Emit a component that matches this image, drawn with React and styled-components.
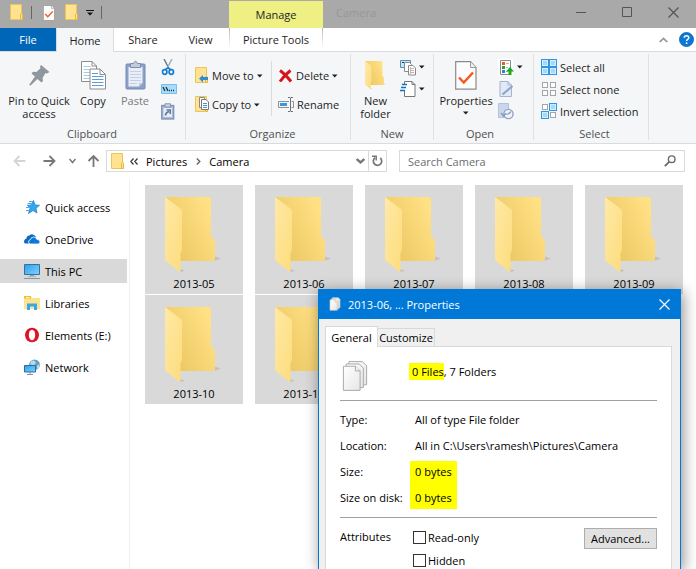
import React, { useState } from "react";
import styled, { createGlobalStyle, css } from "styled-components";

const GlobalStyle = createGlobalStyle`
  * { box-sizing: border-box; }
  body {
    margin: 0;
    background: #fff;
    color: #1e1e1e;
    font: 11px/13px "Open Sans", "Noto Sans", sans-serif;
  }
  button, input { font: inherit; color: inherit; }
  button { border: 0; padding: 0; background: none; cursor: default; }
  a { color: inherit; text-decoration: none; }
  svg { display: block; flex: none; }
`;

const Window = styled.div`
  position: relative;
  display: flex;
  flex-direction: column;
  min-height: 100vh;
  overflow: hidden;
`;

/* ---------- title bar ---------- */

const TitleBar = styled.header`
  display: flex;
  height: 28px;
  background: #a9a9a9;
`;

const QuickBar = styled.div`
  display: flex;
  align-items: flex-start;
  width: 229px;
  padding: 4px 0 0 10px;
`;

const QuickButton = styled.button`
  display: flex;
  align-items: center;
  justify-content: center;
  width: ${(props) => props.$width || 14}px;
  height: 17px;
  margin-right: ${(props) => props.$gap || 0}px;
`;

const QuickDivider = styled.span`
  width: 1px;
  height: 13px;
  margin: 2px ${(props) => props.$gap || 0}px 0 7px;
  background: #666;
`;

const ManageTab = styled.button`
  width: 94px;
  margin-top: 1px;
  background: #eff083;
`;

const WindowTitle = styled.h1`
  flex: 1;
  margin: 0;
  padding-left: 13px;
  font-size: 11px;
  font-weight: 400;
  line-height: 26px;
  color: #979797;
`;

const WindowButton = styled.button`
  display: flex;
  justify-content: center;
  width: 46px;
  padding-top: 7px;
`;

const WindowButtons = styled.div`
  display: flex;
`;

/* ---------- ribbon ---------- */

const TabRow = styled.nav`
  display: flex;
  height: 23px;
`;

const Tab = styled.button`
  width: ${(props) => props.$width}px;
  height: 23px;
  ${(props) =>
    props.$file &&
    css`
      background: #0067b8;
      color: #fff;
    `}
  ${(props) =>
    props.$active &&
    css`
      height: 24px;
      background: #f5f6f7;
      border: 1px solid #dadbdc;
      border-bottom: 0;
      border-top-color: #f5f6f7;
      z-index: 1;
    `}
`;

const ContextTab = styled(Tab)`
  border: 1px solid;
  border-width: 0 1px;
  border-image: linear-gradient(#b5b5b5, #fff 85%) 1;
`;

const TabTools = styled.div`
  display: flex;
  flex: 1;
  align-items: center;
  justify-content: flex-end;
  gap: 11px;
  margin-right: 2px;
`;

const Ribbon = styled.section`
  display: flex;
  height: 93px;
  padding: 2px 0 3px;
  background: #f5f6f7;
  border: solid #dadbdc;
  border-width: 1px 0;
`;

const Group = styled.div`
  display: flex;
  flex-direction: column;
  padding: 0 ${(props) => props.$right || 0}px 0 ${(props) => props.$left || 0}px;
  border-right: 1px solid #e0e1e2;
`;

const GroupBody = styled.div`
  display: flex;
  flex: 1;
`;

const GroupLabel = styled.div`
  text-align: center;
  color: #505050;
`;

const BigButton = styled.button`
  display: flex;
  flex-direction: column;
  align-items: center;
  gap: 4px;
  width: ${(props) => props.$width}px;
  padding-top: 6px;
  color: ${(props) => (props.$dim ? "#7a7a7a" : "inherit")};
`;

const BigIcon = styled.span`
  display: flex;
  align-items: center;
  height: 30px;
`;

const Caption = styled.span`
  white-space: pre;
`;

const SmallStack = styled.div`
  display: flex;
  flex-direction: column;
  padding-top: ${(props) => props.$top || 2}px;
  padding-left: ${(props) => props.$left || 0}px;
  width: ${(props) => props.$width}px;
`;

const SmallButton = styled.button`
  display: flex;
  align-items: center;
  gap: 3px;
  height: ${(props) => props.$height || 22}px;
  white-space: nowrap;
`;

const GroupDivider = styled.span`
  width: 1px;
  margin: 7px 0 11px;
  background: #dadbdc;
`;

/* ---------- address row ---------- */

const AddressRow = styled.div`
  display: flex;
  align-items: center;
  height: 35px;
  padding: 0 11px 1px 13px;
`;

const NavButton = styled.button`
  display: flex;
  justify-content: center;
  width: 12px;
  margin-right: ${(props) => props.$gap}px;
`;

const AddressBox = styled.div`
  display: flex;
  align-items: center;
  flex: 275;
  height: 22px;
  margin-right: 12px;
  padding-left: 4px;
  border: 1px solid #d9d9d9;
  color: #000;
`;

const CrumbMark = styled.span`
  margin-left: 5px;
`;

const Crumb = styled.a`
  margin: 0 9px 0 8px;
`;

const DropButton = styled.button`
  display: flex;
  justify-content: center;
  width: 15px;
  margin-left: auto;
`;

const RefreshButton = styled.button`
  display: flex;
  align-items: center;
  justify-content: center;
  width: 18px;
  height: 20px;
  border-left: 1px solid #d9d9d9;
`;

const SearchBox = styled.label`
  display: flex;
  align-items: center;
  flex: 268;
  height: 22px;
  padding: 0 8px;
  border: 1px solid #d9d9d9;
`;

const SearchInput = styled.input`
  flex: 1;
  min-width: 0;
  padding: 0;
  border: 0;
  outline: 0;
  background: transparent;
  &::placeholder { color: #6d6d6d; opacity: 1; }
`;

/* ---------- body ---------- */

const Body = styled.div`
  display: flex;
  flex: 1;
`;

const Sidebar = styled.nav`
  display: flex;
  flex-direction: column;
  gap: 8px;
  width: 130px;
  padding: 16px 2px 0 0;
  border-right: 1px solid #f0f0f0;
`;

const SideLink = styled.a`
  display: flex;
  align-items: center;
  gap: 5px;
  height: 24px;
  padding-left: 24px;
  color: #000;
  background: ${(props) => (props.$active ? "#d9d9d9" : "transparent")};
`;

const FolderGrid = styled.main`
  flex: 1;
  display: grid;
  grid-template-columns: repeat(auto-fill, 98px);
  grid-auto-rows: 109px;
  gap: 1px 12px;
  align-content: start;
  padding: 6px 0 0 15px;
`;

const FolderTile = styled.button`
  display: flex;
  flex-direction: column;
  align-items: center;
  gap: 3px;
  padding-top: 12px;
  background: #d9d9d9;
  color: #000;
`;

/* ---------- properties dialog ---------- */

const Dialog = styled.section`
  position: absolute;
  top: 289px;
  bottom: 0;
  left: 318px;
  display: flex;
  flex-direction: column;
  width: 363px;
  background: #f0f0f0;
  border: 1px solid #0078d7;
  border-bottom: 0;
  box-shadow: 2px 3px 14px rgba(0, 0, 0, 0.45);
  color: #000;
`;

const DialogTitle = styled.div`
  display: flex;
  align-items: center;
  gap: 7px;
  height: 30px;
  padding: 0 10px 1px;
  background: #0078d7;
  color: #fff;
`;

const DialogClose = styled.button`
  margin-left: auto;
`;

const DialogTabs = styled.div`
  display: flex;
  align-items: flex-end;
  height: 27px;
  padding-left: 6px;
`;

const DialogTab = styled.button`
  position: relative;
  width: ${(props) => (props.$active ? 53 : 57)}px;
  height: ${(props) => (props.$active ? 21 : 18)}px;
  background: ${(props) => (props.$active ? "#fff" : "#f0f0f0")};
  border: 1px solid #d9d9d9;
  border-bottom-width: 0;
  border-left-width: ${(props) => (props.$active ? 1 : 0)}px;
  margin-bottom: ${(props) => (props.$active ? -1 : 0)}px;
`;

const Panel = styled.div`
  flex: 1;
  margin: 0 8px 0 6px;
  padding: 13px 14px 0;
  background: #fff;
  border: 1px solid #d9d9d9;
  border-bottom: 0;
`;

const Summary = styled.div`
  display: flex;
  align-items: flex-start;
  height: 34px;
  padding-left: 2px;
  gap: 41px;
  line-height: 24px;
`;

const Mark = styled.mark`
  background: #ff0;
  color: inherit;
  padding: 1px 0 1px 3px;
`;

const Rule = styled.hr`
  height: 1px;
  margin: 6px 0;
  border: 0;
  background: #a0a0a0;
`;

const Facts = styled.dl`
  display: grid;
  grid-template-columns: 70px 1fr;
  grid-auto-rows: 26px;
  margin: 0;
  line-height: 26px;
`;

const Fact = styled.dd`
  justify-self: start;
  align-self: ${(props) => props.$edge || "stretch"};
  height: ${(props) => (props.$edge ? 24 : 26)}px;
  line-height: ${(props) => (props.$edge === "end" ? 22 : 26)}px;
  margin: 0;
  padding: 0 5px;
  background: ${(props) => (props.$edge ? "#ff0" : "transparent")};
`;

const Attributes = styled.fieldset`
  display: flex;
  align-items: flex-start;
  margin: 0;
  padding: 4px 0 0;
  border: 0;
`;

const AttributeName = styled.span`
  width: 73px;
  line-height: 18px;
`;

const Checks = styled.div`
  flex: 1;
`;

const CheckLabel = styled.label`
  display: flex;
  align-items: center;
  gap: 2px;
  height: 18px;
  margin-bottom: ${(props) => (props.$last ? 0 : 5)}px;
`;

const Check = styled.input`
  appearance: none;
  width: 13px;
  height: 13px;
  margin: 0;
  border: 1px solid #333;
  background: #fff;
  &:checked { background: #333; box-shadow: inset 0 0 0 2px #fff; }
`;

const AdvancedButton = styled.button`
  width: 73px;
  height: 21px;
  background: #e1e1e1;
  border: 1px solid #adadad;
`;

/* ---------- icons ---------- */

const HiddenSvg = styled.svg`
  position: absolute;
`;

const Gradients = () => (
  <HiddenSvg width="0" height="0" aria-hidden="true">
    <defs>
      <linearGradient id="back" x1="0" y1="1" x2="1" y2="0.4">
        <stop offset="0.2" stopColor="#ecc863" />
        <stop offset="1" stopColor="#ffe083" />
      </linearGradient>
      <linearGradient id="flap" x1="0" y1="0" x2="1" y2="1">
        <stop offset="0" stopColor="#ffe9a6" />
        <stop offset="1" stopColor="#fddc7c" />
      </linearGradient>
      <linearGradient id="screen" x1="0" y1="0" x2="1" y2="1">
        <stop offset="0" stopColor="#2ba0ee" />
        <stop offset="1" stopColor="#7fd2fb" />
      </linearGradient>
      <linearGradient id="paper" x1="0" y1="0" x2="1" y2="1">
        <stop offset="0" stopColor="#fff" />
        <stop offset="1" stopColor="#e6e6e6" />
      </linearGradient>
    </defs>
  </HiddenSvg>
);

const OpenFolder = ({ width = 58, height = 77 }) => (
  <svg width={width} height={height} viewBox="0 0 58 77">
    <path d="M49 64 56 61.500 50 59.500ZM15 75.500 20 73.500 15 72Z" fill="#000" opacity=".1" />
    <path d="M0 0H45Q46 0 46 1V39L50 43V63Q50 64 49 64H14Z" fill="url(#back)" />
    <path d="M0 0 16 12Q17 13 17 14V53L15.500 56V75.500L1 64Q0 63 0 62Z" fill="url(#flap)" />
  </svg>
);

const SmallFolder = ({ children }) => (
  <svg width="14" height="17" viewBox="0 0 14 17">
    <path d="M.5.500H11.500V15.500H.5Z" fill="#ffe391" stroke="#eac55c" />
    <path d="M10.500 10.500Q10.500 9.500 11.500 9.500T12.500 10.500V15.500H10.500Z" fill="#ffe391" stroke="#e6b93c" />
    {children}
  </svg>
);

const CheckedPage = ({ width, height }) => (
  <svg width={width} height={height} viewBox="0 0 22 29">
    <path d="M.7.700H15.500L21 6.500V28.200H.7Z" fill="#fdfdfd" stroke="#8a8a8a" strokeWidth="1.200" />
    <path d="M15.500.7V6.500H21" fill="#eee" stroke="#9a9a9a" />
    <path d="M4 16.500 8.800 21.500 18 11.500" fill="none" stroke="#f4581c" strokeWidth="2.500" />
  </svg>
);

const Caret = () => (
  <svg width="6" height="4" viewBox="0 0 6 4">
    <path d="M0 .5H5.500L2.750 3.500Z" fill="#1e1e1e" />
  </svg>
);

const PinIcon = () => (
  <svg width="21" height="21" viewBox="0 0 21 21">
    <path d="M12 0 20.500 7 18 8.500 16.500 8 13.500 13 14 16 12.500 17.500 8.500 14 1.500 20.500 0 20 6 11.500 2.500 8.500 4 6.800 7.500 7 11.500 3.200 11 1.500Z" fill="#8f979e" />
  </svg>
);

const CopyIcon = () => (
  <svg width="25" height="29" viewBox="0 0 25 29">
    <path d="M.5.500H11L15.500 5V20.500H.5Z" fill="#fff" stroke="#8c8c8c" />
    <path d="M2.500 5.500H10M2.500 8.500H9M2.500 11.500H9M2.500 14.500H9M2.500 17.500H9" stroke="#a9cbea" />
    <path d="M9 8H19L24.500 13.500V28H9Z" fill="#fff" stroke="#8c8c8c" />
    <path d="M19 8V13.500H24.500M11 .5V5H15.500" fill="none" stroke="#8c8c8c" />
    <path d="M11 12.500H17M11 15.500H22.500M11 18.500H22.500M11 21.500H22.500M11 24.500H22.500" stroke="#5b9bdb" />
  </svg>
);

const PasteIcon = () => (
  <svg width="21" height="30" viewBox="0 0 21 30">
    <rect x="1" y="4" width="19" height="25" rx="1" fill="#8ca0c8" stroke="#7589b4" />
    <path d="M3.500 7H17.500V23L14 26.500H3.500Z" fill="#e9eef7" />
    <path d="M5 11.500H16M5 14.500H16M5 17.500H16M5 20.500H16M5 23.500H12" stroke="#c3cfe4" />
    <path d="M5.500 3.500H8.500Q10.500-1 12.500 3.500H15.500V7.500H5.500Z" fill="#c3cbd9" stroke="#7b8fae" />
    <path d="M14 26.500V23H17.500Z" fill="#bdcae2" />
  </svg>
);

const CutIcon = () => (
  <svg width="14" height="17" viewBox="0 0 14 17">
    <path d="M3 0 8.500 10.500" stroke="#5f6c78" strokeWidth="1.300" />
    <path d="M11 0 5.500 10.500" stroke="#a5b0ba" strokeWidth="1.600" />
    <ellipse cx="3.700" cy="13" rx="2.200" ry="2.300" fill="none" stroke="#1580d2" strokeWidth="1.700" />
    <ellipse cx="10.300" cy="13" rx="2.200" ry="2.300" fill="none" stroke="#1580d2" strokeWidth="1.700" />
    <path d="M3.500 10.800 7 8.800 10.500 10.800" fill="none" stroke="#1580d2" strokeWidth="1.500" />
  </svg>
);

const PathIcon = () => (
  <svg width="16" height="10" viewBox="0 0 16 10">
    <path d="M.5.500H15.500V9.500H.5Z" fill="#a9dcfb" stroke="#79bde9" />
    <path d="M2 3 4 7M5 3 7 7" stroke="#20303c" strokeWidth="1.300" />
    <path d="M8 6.500H9M10 6.500H11M12 6.500H13" stroke="#20303c" strokeWidth="1.300" />
  </svg>
);

const ShortcutIcon = () => (
  <svg width="14" height="17" viewBox="0 0 14 17">
    <rect x=".7" y="2.500" width="12" height="13.500" fill="#a9b9d6" stroke="#7f93b9" strokeWidth="1.300" />
    <path d="M2.500 5H11V14H2.500Z" fill="#e6ecf6" />
    <path d="M4 .8H9.500V4H4Z" fill="#ccd5e4" stroke="#7f93b9" />
    <path d="M4.500 12.500Q4.500 9.500 8 8.500M5.500 7H9.300V11" fill="none" stroke="#61799f" strokeWidth="1.600" />
  </svg>
);

const DeleteIcon = () => (
  <svg width="15" height="14" viewBox="0 0 15 14">
    <path d="M2 1.500Q7 5 13 12.500M12.500 1.500Q7 5.500 2 12.500" fill="none" stroke="#d9131d" strokeWidth="3" />
  </svg>
);

const RenameIcon = () => (
  <svg width="16" height="15" viewBox="0 0 16 15">
    <path d="M11 4.500H.5V10.500H11M13.500 4.500H15.500V10.500H13.500" fill="none" stroke="#8c9299" />
    <path d="M2 6H9V9H2Z" fill="#3a96dd" />
    <path d="M12.500 1V14M10 .5H12L12.500 1 13 .5H15M10 14.500H12L12.500 14 13 14.500H15" fill="none" stroke="#6d7379" />
  </svg>
);

const NewItemIcon = () => (
  <svg width="16" height="17" viewBox="0 0 16 17">
    <path d="M.5 1.500H10.500V8.500H.5Z" fill="#c8e6f6" stroke="#4f8fb5" />
    <path d="M2 3.500H4M5 3.500H8" stroke="#333" />
    <path d="M4.500 3.500H9.500L11.500 5.500V12.500H4.500Z" fill="#fff" stroke="#8a8a8a" />
    <path d="M8.500 6.500H13L15.500 9V16H8.500Z" fill="#fff" stroke="#8a8a8a" />
    <path d="M10 9.500H14M10 11.500H14M10 13.500H14" stroke="#e9a78a" />
    <path d="M10.500 8V15" stroke="#9cc4ea" />
  </svg>
);

const EasyAccessIcon = () => (
  <svg width="16" height="17" viewBox="0 0 16 17">
    <path d="M4.500.500H12L15 3.500V15.500H4.500Z" fill="#fff" stroke="#777" />
    <path d="M12 .5V3.500H15" fill="none" stroke="#777" />
    <path d="M4 3V10" stroke="#fff" strokeWidth="2" />
    <path d="M2 3.500H7M1 6.500H6M0 9.500H5" stroke="#1371c3" strokeWidth="1.300" />
  </svg>
);

const OpenWithIcon = () => (
  <svg width="16" height="17" viewBox="0 0 16 17">
    <path d="M0 0H15V16H0Z" fill="#fff" />
    <path d="M2.500 1.500H12.500V15.500H2.500Z" fill="#fff" stroke="#8a8a8a" />
    <path d="M4 3H7V6H4Z" fill="#f0581f" />
    <path d="M4 7H7V10H4Z" fill="#25a52a" />
    <path d="M4 11H7V14H4Z" fill="#2f7fd0" />
    <path d="M8 4.500H11M8 8.500H10M8 12.500H10" stroke="#bbb" />
    <path d="M12 8 16 12.500H13.500V16H10.500V12.500H8Z" fill="#1aab1d" />
  </svg>
);

const EditIcon = () => (
  <svg width="16" height="17" viewBox="0 0 16 17">
    <path d="M2 .5H10L13.500 4V15.500H2Z" fill="#e2e9f5" stroke="#a5b4d2" />
    <path d="M10 .5V4H13.500" fill="none" stroke="#a5b4d2" />
    <path d="M4.500 13.500 14.500 5" stroke="#91a5ca" strokeWidth="2.200" />
  </svg>
);

const HistoryIcon = () => (
  <svg width="16" height="17" viewBox="0 0 16 17">
    <path d="M.5.500H10.500V14.500H.5Z" fill="#cbd6ea" stroke="#b4c2dd" />
    <circle cx="10.500" cy="11" r="4.600" fill="#eef2f9" stroke="#8fa2c6" strokeWidth="1.400" />
    <path d="M10.500 11 13 8.500M10.500 11H8M3 10 5.500 13 8 10.500" fill="none" stroke="#8196bd" strokeWidth="1.200" />
  </svg>
);

const SELECT_CELLS = [[1, 1], [9, 1], [1, 9], [9, 9]];

const SelectIcon = ({ filled }) => (
  <svg width="16" height="16" viewBox="0 0 16 16">
    {SELECT_CELLS.map(([x, y], i) =>
      filled.includes(i) ? (
        <g key={i}>
          <rect x={x - 1} y={y - 1} width="8" height="8" fill="#3195e6" />
          <rect x={x} y={y} width="6" height="6" fill="#d5eefd" />
          <rect x={x + 1} y={y + 1} width="4" height="4" fill="#a3dafa" />
        </g>
      ) : (
        <rect key={i} x={x + 0.5} y={y + 0.5} width="5" height="5" fill="#fff" stroke="#a5a5a5" />
      )
    )}
  </svg>
);

const HelpIcon = () => (
  <svg width="15" height="15" viewBox="0 0 15 15">
    <circle cx="7.500" cy="7.500" r="7" fill="#0a78d6" stroke="#0b5cab" strokeWidth=".8" />
    <path d="M5.300 5.800Q5.300 3.700 7.500 3.700T9.800 5.700Q9.800 6.700 8.600 7.300 7.600 7.900 7.600 9" fill="none" stroke="#fff" strokeWidth="1.500" />
    <circle cx="7.600" cy="11.200" r=".9" fill="#fff" />
  </svg>
);

const Arrow = ({ color, rotate = 0 }) => (
  <svg width="13" height="12" viewBox="0 0 13 12">
    <path d="M12.500 6H1.500M6.500 1 1.500 6 6.500 11" fill="none" stroke={color} strokeWidth="1.800" transform={`rotate(${rotate} 6.500 6)`} />
  </svg>
);

const Chevron = ({ up, size = 7, color = "#777", weight = 1.5 }) => (
  <svg width={size} height="6" viewBox="0 0 7 6" preserveAspectRatio="none">
    <path d={up ? "M.5 5 3.500 1.500 6.500 5" : "M.5 1 3.500 4.500 6.500 1"} fill="none" stroke={color} strokeWidth={weight} />
  </svg>
);

const RefreshIcon = () => (
  <svg width="11" height="12" viewBox="0 0 11 12">
    <path d="M3 2.800A4.200 4.200 0 1 0 8.300 3" fill="none" stroke="#777" strokeWidth="1.700" />
    <path d="M0 1.200H4.200V5.500" fill="none" stroke="#777" strokeWidth="1.500" />
  </svg>
);

const SearchIcon = () => (
  <svg width="12" height="12" viewBox="0 0 12 12">
    <circle cx="7.700" cy="4.200" r="3.300" fill="none" stroke="#6a6a6a" strokeWidth="1.400" />
    <path d="M5.200 6.800.8 11.200" stroke="#6a6a6a" strokeWidth="1.800" />
  </svg>
);

const StarIcon = () => (
  <svg width="16" height="16" viewBox="0 0 16 16">
    <path d="M9.500 1.500 11 6 15.500 6.300 12 9.300 13 14 9 11.500 4.500 14.500 6 9.500 3.500 6.300 7.500 6Z" fill="#36a6ec" stroke="#1d86d0" strokeWidth=".8" />
    <path d="M5 2.500H9M3.500 4.500H8M2 8.500H6M2 11.500H5" stroke="#4aa9e6" />
  </svg>
);

const CloudIcon = () => (
  <svg width="16" height="16" viewBox="0 0 16 16">
    <path d="M0 11Q0 8 2.500 7.500 2.500 4.500 5.500 4.500 7.500 2.200 10 4Q12 5 12 7L9 8 5 12.500H2Q0 12.500 0 11Z" fill="#0a6bc0" />
    <path d="M4.500 11Q4.500 8.800 6.500 8.600 7 6 9.500 6 12 6 12.700 8.300 16 8.500 16 11 16 13 14 13H6.500Q4.500 13 4.500 11Z" fill="#0a78d6" stroke="#fff" strokeWidth=".8" />
  </svg>
);

const PcIcon = () => (
  <svg width="16" height="16" viewBox="0 0 16 16">
    <path d="M.5 1.500H15.500V11.500H.5Z" fill="url(#screen)" stroke="#3a6f96" />
    <path d="M6 12H10V13H6Z" fill="#8fa3b3" />
    <path d="M0 15.500H16" stroke="#7d98ad" />
    <path d="M4 13.500H12" stroke="#a7b6c2" />
  </svg>
);

const LibraryIcon = () => (
  <svg width="16" height="16" viewBox="0 0 16 16">
    <path d="M0 1H7L8 3H16V14H0Z" fill="#fde391" />
    <path d="M0 1H7V3.500H0Z" fill="#e8c12e" />
    <path d="M2 2.500H5.500" stroke="#fff6cf" />
    <path d="M3 15V8.500H13V15H10V11.500H6V15Z" fill="#36a8ea" />
  </svg>
);

const OperaIcon = () => (
  <svg width="16" height="16" viewBox="0 0 16 16">
    <ellipse cx="8" cy="8" rx="7" ry="7.300" fill="#dd1426" />
    <ellipse cx="8" cy="8" rx="3.200" ry="5.200" fill="#fff" />
  </svg>
);

const NetworkIcon = () => (
  <svg width="16" height="16" viewBox="0 0 16 16">
    <circle cx="10.500" cy="5.800" r="5.400" fill="#5f9fc4" />
    <path d="M7 2Q11 .5 12 4L9.500 7 6 5ZM13 6.500 15.500 5 15 9 13 10Z" fill="#b9d8e4" />
    <path d="M.5 6.500H11.500V13H.5Z" fill="url(#screen)" stroke="#2d6c9a" />
    <path d="M3 15.500H9M5 14H7" stroke="#8096a6" />
  </svg>
);

const Papers = ({ width, height }) => (
  <svg width={width} height={height} viewBox="0 0 28 34">
    <g fill="url(#paper)" stroke="#a5a5a5">
      <path d="M7.500 1.500H22L26.500 6V26.500H7.500Z" />
      <path d="M4.500 4H18.500L23 8.500V29.500H4.500Z" />
      <path d="M1.500 6.500H14.500L19.500 11.500V32.500H1.500Z" />
      <path d="M14.500 6.500V11.500H19.500" />
    </g>
  </svg>
);

const CrossIcon = ({ color }) => (
  <svg width="11" height="11" viewBox="0 0 11 11">
    <path d="M.5.500 10.500 10.500M10.500.500.500 10.500" stroke={color} strokeWidth="1.200" />
  </svg>
);

/* ---------- page ---------- */

const places = [
  { name: "Quick access", icon: <StarIcon /> },
  { name: "OneDrive", icon: <CloudIcon /> },
  { name: "This PC", icon: <PcIcon />, active: true },
  { name: "Libraries", icon: <LibraryIcon /> },
  { name: "Elements (E:)", icon: <OperaIcon /> },
  { name: "Network", icon: <NetworkIcon /> },
];

const folders = ["2013-05", "2013-06", "2013-07", "2013-08", "2013-09", "2013-10", "2013-11"];

const Header = () => (
  <TitleBar>
    <QuickBar>
      <QuickButton aria-label="Folder"><SmallFolder /></QuickButton>
      <QuickDivider $gap={10} />
      <QuickButton aria-label="Properties" $gap={9}><CheckedPage width={12} height={16} /></QuickButton>
      <QuickButton aria-label="New folder" $gap={6}><SmallFolder /></QuickButton>
      <QuickButton aria-label="Customize toolbar" $width={9}>
        <svg width="8" height="6" viewBox="0 0 8 6">
          <path d="M0 .5H8" stroke="#111" />
          <path d="M1 2.500H7L4 5.500Z" fill="#111" />
        </svg>
      </QuickButton>
      <QuickDivider />
    </QuickBar>
    <ManageTab>Manage</ManageTab>
    <WindowTitle>Camera</WindowTitle>
    <WindowButtons>
      <WindowButton aria-label="Minimize">
        <svg width="11" height="11" viewBox="0 0 11 11"><path d="M0 5.500H10" stroke="#555" /></svg>
      </WindowButton>
      <WindowButton aria-label="Maximize">
        <svg width="11" height="11" viewBox="0 0 11 11"><path d="M.5.500H9.500V9.500H.5Z" fill="none" stroke="#555" /></svg>
      </WindowButton>
      <WindowButton aria-label="Close"><CrossIcon color="#555" /></WindowButton>
    </WindowButtons>
  </TitleBar>
);

const Tabs = () => (
  <TabRow>
    <Tab $file $width={56}>File</Tab>
    <Tab $active $width={58}>Home</Tab>
    <Tab $width={58}>Share</Tab>
    <Tab $width={57}>View</Tab>
    <ContextTab $width={94}>Picture Tools</ContextTab>
    <TabTools>
      <button aria-label="Collapse ribbon"><Chevron up size={9} color="#999" /></button>
      <button aria-label="Help"><HelpIcon /></button>
    </TabTools>
  </TabRow>
);

const RibbonBar = () => (
  <Ribbon>
    <Group $left={5} $right={6}>
      <GroupBody>
        <BigButton $width={68}>
          <BigIcon><PinIcon /></BigIcon>
          <Caption>{"Pin to Quick\naccess"}</Caption>
        </BigButton>
        <BigButton $width={40}>
          <BigIcon><CopyIcon /></BigIcon>
          <Caption>Copy</Caption>
        </BigButton>
        <BigButton $width={44} $dim>
          <BigIcon><PasteIcon /></BigIcon>
          <Caption>Paste</Caption>
        </BigButton>
        <SmallStack $left={4} $width={22}>
          <SmallButton aria-label="Cut"><CutIcon /></SmallButton>
          <SmallButton aria-label="Copy path"><PathIcon /></SmallButton>
          <SmallButton aria-label="Paste shortcut"><ShortcutIcon /></SmallButton>
        </SmallStack>
      </GroupBody>
      <GroupLabel>Clipboard</GroupLabel>
    </Group>

    <Group $left={9}>
      <GroupBody>
        <SmallStack $top={7} $width={76}>
          <SmallButton $height={29}>
            <SmallFolder>
              <path d="M4 11.500 8 8V10H13V13H8V15.500Z" fill="#2f8bd8" />
            </SmallFolder>
            Move to <Caret />
          </SmallButton>
          <SmallButton $height={29}>
            <SmallFolder>
              <path d="M4.500 1.500H9.500V11.500H4.500Z" fill="#fff" stroke="#888" />
              <path d="M6.500 3.500H11L13.500 6V13.500H6.500Z" fill="#fff" stroke="#777" />
              <path d="M8 7.500H12M8 9.500H12M8 11.500H12" stroke="#4b92d4" />
            </SmallFolder>
            Copy to <Caret />
          </SmallButton>
        </SmallStack>
        <GroupDivider />
        <SmallStack $top={7} $left={6} $width={78}>
          <SmallButton $height={29}><DeleteIcon />Delete <Caret /></SmallButton>
          <SmallButton $height={29}><RenameIcon />Rename</SmallButton>
        </SmallStack>
      </GroupBody>
      <GroupLabel>Organize</GroupLabel>
    </Group>

    <Group>
      <GroupBody>
        <BigButton $width={49}>
          <BigIcon><OpenFolder width={22} height={29} /></BigIcon>
          <Caption>{"New\nfolder"}</Caption>
        </BigButton>
        <SmallStack $width={33}>
          <SmallButton aria-label="New item"><NewItemIcon /><Caret /></SmallButton>
          <SmallButton aria-label="Easy access"><EasyAccessIcon /><Caret /></SmallButton>
        </SmallStack>
      </GroupBody>
      <GroupLabel>New</GroupLabel>
    </Group>

    <Group $right={7}>
      <GroupBody>
        <BigButton $width={64}>
          <BigIcon><CheckedPage width={22} height={29} /></BigIcon>
          <Caption>Properties</Caption>
          <Caret />
        </BigButton>
        <SmallStack $width={28}>
          <SmallButton aria-label="Open"><OpenWithIcon /><Caret /></SmallButton>
          <SmallButton aria-label="Edit"><EditIcon /></SmallButton>
          <SmallButton aria-label="History"><HistoryIcon /></SmallButton>
        </SmallStack>
      </GroupBody>
      <GroupLabel>Open</GroupLabel>
    </Group>

    <Group $left={7}>
      <GroupBody>
        <SmallStack $width={107}>
          <SmallButton><SelectIcon filled={[0, 1, 2, 3]} />Select all</SmallButton>
          <SmallButton><SelectIcon filled={[]} />Select none</SmallButton>
          <SmallButton><SelectIcon filled={[1, 2]} />Invert selection</SmallButton>
        </SmallStack>
      </GroupBody>
      <GroupLabel>Select</GroupLabel>
    </Group>
  </Ribbon>
);

const AddressBar = () => (
  <AddressRow>
    <NavButton aria-label="Back" $gap={18}><Arrow color="#d5d5d5" /></NavButton>
    <NavButton aria-label="Forward" $gap={11}><Arrow color="#777" rotate={180} /></NavButton>
    <NavButton aria-label="Recent locations" $gap={9}><Chevron /></NavButton>
    <NavButton aria-label="Up" $gap={7}><Arrow color="#777" rotate={90} /></NavButton>
    <AddressBox>
      <SmallFolder />
      <CrumbMark>
        <svg width="8" height="7" viewBox="0 0 8 7">
          <path d="M3.500.5.800 3.500 3.500 6.500M7.500.5 4.800 3.500 7.500 6.500" fill="none" stroke="#333" strokeWidth="1.200" />
        </svg>
      </CrumbMark>
      <Crumb href="#pictures">Pictures</Crumb>
      <svg width="5" height="7" viewBox="0 0 5 7">
        <path d="M.8.500 3.800 3.500.800 6.500" fill="none" stroke="#666" strokeWidth="1.400" />
      </svg>
      <Crumb href="#camera">Camera</Crumb>
      <DropButton aria-label="Previous locations"><Chevron size={9} weight={2} /></DropButton>
      <RefreshButton aria-label="Refresh"><RefreshIcon /></RefreshButton>
    </AddressBox>
    <SearchBox>
      <SearchInput type="text" aria-label="Search Camera" placeholder="Search Camera" />
      <SearchIcon />
    </SearchBox>
  </AddressRow>
);

const PropertiesDialog = ({ onClose }) => (
  <Dialog role="dialog" aria-label="Properties">
    <DialogTitle>
      <Papers width={12} height={14} />
      2013-06, ... Properties
      <DialogClose aria-label="Close" onClick={onClose}><CrossIcon color="#fff" /></DialogClose>
    </DialogTitle>
    <DialogTabs>
      <DialogTab $active>General</DialogTab>
      <DialogTab>Customize</DialogTab>
    </DialogTabs>
    <Panel>
      <Summary>
        <Papers width={26} height={32} />
        <span><Mark>0 Files</Mark>, 7 Folders</span>
      </Summary>
      <Rule />
      <Facts>
        <dt>Type:</dt>
        <Fact>All of type File folder</Fact>
        <dt>Location:</dt>
        <Fact>All in C:\Users\ramesh\Pictures\Camera</Fact>
        <dt>Size:</dt>
        <Fact $edge="end">0 bytes</Fact>
        <dt>Size on disk:</dt>
        <Fact $edge="start">0 bytes</Fact>
      </Facts>
      <Rule />
      <Attributes>
        <AttributeName>Attributes</AttributeName>
        <Checks>
          <CheckLabel><Check type="checkbox" />Read-only</CheckLabel>
          <CheckLabel $last><Check type="checkbox" />Hidden</CheckLabel>
        </Checks>
        <AdvancedButton>Advanced...</AdvancedButton>
      </Attributes>
    </Panel>
  </Dialog>
);

const App = () => {
  const [showProperties, setShowProperties] = useState(true);
  return (
    <Window>
      <GlobalStyle />
      <Gradients />
      <Header />
      <Tabs />
      <RibbonBar />
      <AddressBar />
      <Body>
        <Sidebar>
          {places.map((place) => (
            <SideLink key={place.name} href="#" $active={place.active}>
              {place.icon}
              {place.name}
            </SideLink>
          ))}
        </Sidebar>
        <FolderGrid>
          {folders.map((name) => (
            <FolderTile key={name}>
              <OpenFolder />
              {name}
            </FolderTile>
          ))}
        </FolderGrid>
      </Body>
      {showProperties && <PropertiesDialog onClose={() => setShowProperties(false)} />}
    </Window>
  );
};

export default App;
